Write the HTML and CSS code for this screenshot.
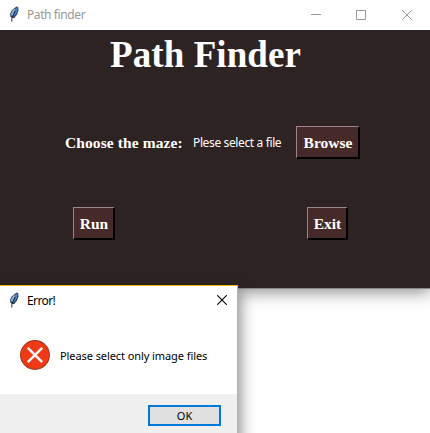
FILE: index.html
```html
<!DOCTYPE html>
<html lang="en">
<head>
<meta charset="utf-8">
<title>Path finder</title>
<link rel="stylesheet" href="styles.css">
</head>
<body>
<svg class="defs" aria-hidden="true">
  <symbol id="feather" viewBox="0 0 10 16">
    <path d="M7.5 .5 9.2 1.2 9.4 4.5 8 8.5 5.2 12 3.5 12.2 1.3 10.5 1.2 7.5 3 4.2Z" fill="#26344c"/>
    <path d="M7.4 1.3 8.5 2 8.3 5 7 8 4.7 11 3.6 10.8 4.6 7.2Z" fill="#4a86d0"/>
    <path d="M6.7 2 5.8 4.4 3.4 9.7 2 9.4 2.1 7.5 3.8 4.6Z" fill="#8fbaea"/>
    <path d="M6.2 5 4 10 2.8 12.5V15.5" fill="none" stroke="#111" stroke-width=".9"/>
  </symbol>
</svg>
<main class="window">
  <header class="titlebar">
    <svg class="feather"><use href="#feather"/></svg>
    <span class="caption caption-main">Path finder</span>
    <div class="controls">
      <svg width="10" height="10"><path d="M0 4.5H10"/></svg>
      <svg width="10" height="10"><path d="M.5 .5H9.5V9.5H.5Z"/></svg>
      <svg width="10" height="10"><path d="M.3 .3 9.7 9.7M9.7 .3 .3 9.7"/></svg>
    </div>
  </header>
  <section class="content">
    <h1>Path Finder</h1>
    <div class="choose">
      <span class="label">Choose the maze:</span>
      <span class="file">Plese select a file</span>
      <button class="btn browse">Browse</button>
    </div>
    <div class="actions">
      <button class="btn run">Run</button>
      <button class="btn exit">Exit</button>
    </div>
  </section>
</main>
<section class="dialog" role="alertdialog">
  <header class="titlebar dialog-title">
    <svg class="feather"><use href="#feather"/></svg>
    <span class="caption caption-error">Error!</span>
    <svg class="close" width="10" height="10"><path d="M.2 .2 9.8 9.8M9.8 .2 .2 9.8"/></svg>
  </header>
  <div class="message">
    <svg class="error" width="30" height="30" viewBox="0 0 30 30">
      <circle cx="15" cy="15" r="14.4" fill="#f03a17" stroke="#a83a22" stroke-width="1.1"/>
      <path d="M7.8 7.8 22.2 22.2M22.2 7.8 7.8 22.2" stroke="#fff" stroke-width="2.4"/>
    </svg>
    <span class="message-text">Please select only image files</span>
  </div>
  <footer><button class="ok">OK</button></footer>
</section>
</body>
</html>
```
FILE: styles.css
```css
* { box-sizing: border-box; }
body {
  margin: 0;
  width: 430px;
  height: 433px;
  position: relative;
  overflow: hidden;
  background: #fff;
  font-family: "Noto Sans", "Open Sans", sans-serif;
  font-size: 12px;
  line-height: 16px;
}
.defs { position: absolute; width: 0; height: 0; }
button { margin: 0; padding: 0; font: inherit; border-radius: 0; }
span, button { white-space: nowrap; }

.window {
  height: 288px;
  background: #2d2323;
  box-shadow: 0 1px 0 #8d8989, 0 3px 16px 1px rgba(0, 0, 0, .45);
}
.titlebar {
  display: flex;
  align-items: center;
  height: 30px;
  padding-left: 9px;
  background: #fff;
}
.feather { width: 10px; height: 16px; margin: -2px 8px 0 0; }
.caption-main { color: #999; letter-spacing: -.4px; }
.caption-error { color: #000; letter-spacing: -.6px; }
.controls {
  display: flex;
  gap: 35px;
  margin-left: auto;
  padding: 0 18px 1px 0;
}
.controls svg { fill: none; stroke: #999; }
.controls svg:last-child { margin-left: 1px; }

.content {
  font-family: "Liberation Serif", serif;
  color: #fff;
}
h1 {
  margin: 0;
  padding: 4px 0 0 110px;
  font-size: 37px;
  line-height: 42px;
  font-weight: bold;
  letter-spacing: .08px;
}
.choose { display: flex; align-items: center; height: 33px; margin-top: 50px; padding-left: 65px; }
.label { width: 128px; padding-top: 1px; font-size: 15.5px; font-weight: bold; letter-spacing: .1px; }
.file { width: 103px; font-family: "Noto Sans", sans-serif; letter-spacing: -.37px; }
.btn {
  height: 33px;
  border: 1px solid #9b8787;
  border-right: 2px solid #000;
  border-bottom: 2px solid #000;
  padding: 1px 0 0 1px;
  background: #462a2a;
  color: #fff;
  font-size: 15.5px;
  font-weight: bold;
}
.browse { width: 64px; }
.actions { display: flex; margin-top: 48px; padding-left: 73px; }
.run { width: 42px; margin-right: 192px; }
.exit { width: 41px; }

.dialog {
  position: absolute;
  left: 0;
  top: 285px;
  width: 238px;
  height: 160px;
  background: #fff;
  border-top: 1px solid #f5b400;
  border-right: 1px solid #f5b400;
  box-shadow: 2px 7px 14px rgba(0, 0, 0, .48);
}
.close { margin: 0 10px 2px auto; fill: none; stroke: #000; stroke-width: 1.1; }
.message { display: flex; align-items: center; height: 78px; padding-left: 20px; }
.message-text { margin: 2px 0 0 10px; font-size: 11px; letter-spacing: -.08px; }
footer { height: 52px; padding: 11px 16px 0; background: #f0f0f0; text-align: right; }
.ok {
  display: block;
  width: 73px;
  height: 21px;
  margin-left: auto;
  border: 2px solid #0078d7;
  background: #e1e1e1;
  color: #000;
  font-size: 11px;
}
```
